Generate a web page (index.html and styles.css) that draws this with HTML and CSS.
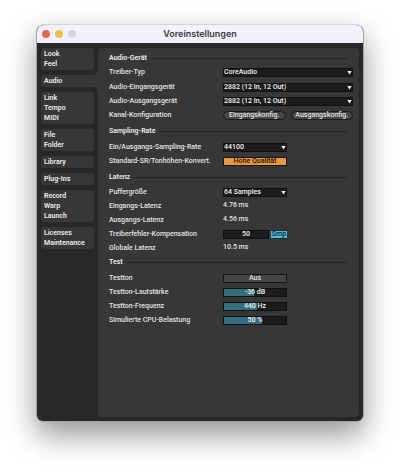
FILE: index.html
```html
<!DOCTYPE html>
<html lang="de">
<head>
  <meta charset="UTF-8">
  <meta name="viewport" content="width=device-width, initial-scale=1">
  <title>Voreinstellungen</title>
  <link rel="stylesheet" href="styles.css">
</head>
<body>
  <div class="window">
    <header class="titlebar">
      <div class="lights">
        <button class="light close" aria-label="Schließen"></button>
        <button class="light minimize" aria-label="Minimieren"></button>
        <button class="light zoom" aria-label="Zoomen" disabled></button>
      </div>
      <h1>Voreinstellungen</h1>
    </header>
    <div class="content">
      <nav class="tabs">
        <a class="tab" href="#look">Look<br>Feel</a>
        <a class="tab active" href="#audio">Audio</a>
        <a class="tab" href="#link">Link<br>Tempo<br>MIDI</a>
        <a class="tab" href="#file">File<br>Folder</a>
        <a class="tab" href="#library">Library</a>
        <a class="tab" href="#plugins">Plug-Ins</a>
        <a class="tab" href="#record">Record<br>Warp<br>Launch</a>
        <a class="tab" href="#licenses">Licenses<br>Maintenance</a>
      </nav>
      <main class="panel">
        <section class="device">
          <h2>Audio-Gerät</h2>
          <div class="row driver">
            <label for="driver">Treiber-Typ</label>
            <div class="select wide"><select id="driver"><option>CoreAudio</option></select></div>
          </div>
          <div class="row">
            <label for="input">Audio-Eingangsgerät</label>
            <div class="select wide"><select id="input"><option>2882 (12 In, 12 Out)</option></select></div>
          </div>
          <div class="row">
            <label for="output">Audio-Ausgangsgerät</label>
            <div class="select wide"><select id="output"><option>2882 (12 In, 12 Out)</option></select></div>
          </div>
          <div class="row">
            <span>Kanal-Konfiguration</span>
            <div class="wide buttons">
              <button class="pill">Eingangskonfig.</button>
              <button class="pill">Ausgangskonfig.</button>
            </div>
          </div>
        </section>

        <section>
          <h2>Sampling-Rate</h2>
          <div class="row">
            <label for="rate">Ein/Ausgangs-Sampling-Rate</label>
            <div class="select"><select id="rate"><option>44100</option></select></div>
          </div>
          <div class="row">
            <label for="quality">Standard-SR/Tonhöhen-Konvert.</label>
            <button class="toggle on" id="quality">Hohe Qualität</button>
          </div>
        </section>

        <section class="latency">
          <h2>Latenz</h2>
          <div class="row">
            <label for="buffer">Puffergröße</label>
            <div class="select"><select id="buffer"><option>64 Samples</option></select></div>
          </div>
          <div class="row"><span>Eingangs-Latenz</span><span class="value">4.76 ms</span></div>
          <div class="row"><span>Ausgangs-Latenz</span><span class="value">4.56 ms</span></div>
          <div class="row">
            <label for="compensation">Treiberfehler-Kompensation</label>
            <div class="compensation">
              <input type="text" id="compensation" value="50">
              <button class="unit">Smp</button>
            </div>
          </div>
          <div class="row"><span>Globale Latenz</span><span class="value">10.5 ms</span></div>
        </section>

        <section class="test">
          <h2>Test</h2>
          <div class="row">
            <label for="tone">Testton</label>
            <button class="toggle" id="tone">Aus</button>
          </div>
          <div class="row">
            <label for="volume">Testton-Lautstärke</label>
            <div class="slider">
              <input type="range" id="volume" min="0" max="100" value="48" style="--fill: 48%">
              <output for="volume">-36 dB</output>
            </div>
          </div>
          <div class="row">
            <label for="frequency">Testton-Frequenz</label>
            <div class="slider">
              <input type="range" id="frequency" min="0" max="100" value="54" style="--fill: 54%">
              <output for="frequency">440 Hz</output>
            </div>
          </div>
          <div class="row">
            <label for="cpu">Simulierte CPU-Belastung</label>
            <div class="slider">
              <input type="range" id="cpu" min="0" max="100" value="62" style="--fill: 62%">
              <output for="cpu">50 %</output>
            </div>
          </div>
        </section>
      </main>
    </div>
  </div>
</body>
</html>
```
FILE: styles.css
```css
* { box-sizing: border-box; }
body { margin: 0; min-height: 100vh; padding: 24px 36px 48px; display: flex; background: #fff; font-family: Roboto, "Liberation Sans", sans-serif; font-size: 7px; font-weight: 500; line-height: 10px; color: #e2e2e2; }
button, input, select { font: inherit; color: inherit; margin: 0; padding: 0; border: 0; border-radius: 0; }

.window { flex: 1; min-width: 0; display: flex; flex-direction: column; border: 1px solid #a5a5a5; border-top-color: #d4d4d4; border-radius: 8px 8px 7px 7px; background: #282828; overflow: hidden; box-shadow: 0 13px 30px rgba(0, 0, 0, 0.42); }

/* title bar */
.titlebar { display: grid; grid-template-columns: 48px 1fr 48px; align-items: center; height: 18px; background: #eff2fb; }
.titlebar h1 { margin: 0; font-family: Inter, "Liberation Sans", sans-serif; font-size: 9px; font-weight: 600; line-height: 12px; text-align: center; color: #3c3c40; }
.lights { display: flex; gap: 5px; padding-left: 5px; }
.light { width: 8px; height: 8px; border-radius: 50%; }
.close { background: #ec6559; }
.minimize { background: #f4bd4f; }
.zoom { background: #d3d6de; }

.content { flex: 1; display: flex; gap: 4px; padding: 5px 4px 4px; }

/* tabs */
.tabs { width: 53px; flex: none; display: flex; flex-direction: column; gap: 5px; }
.tab { display: block; padding: 1px 3px; border-radius: 3px; background: #373737; color: #ececec; font-weight: 600; text-decoration: none; }
.tab.active { position: relative; margin-right: -6px; border-radius: 3px 0 0 3px; }
.tab.active::before, .tab.active::after { content: ""; position: absolute; right: 2px; width: 4px; height: 4px; }
.tab.active::before { top: -4px; background: radial-gradient(circle at 0 0, #282828 3px, #373737 4px); }
.tab.active::after { bottom: -4px; background: radial-gradient(circle at 0 100%, #282828 3px, #373737 4px); }

/* settings */
.panel { flex: 1; min-width: 0; padding: 3px 6px 8px 11px; border-radius: 4px; background: #373737; }
section { margin-bottom: 2px; }
h2 { display: flex; align-items: center; gap: 4px; height: 14px; margin: 0 5px 2px 0; font-size: 7px; font-weight: 600; color: #ececec; }
h2::after { content: ""; flex: 1; height: 1px; background: #252525; }
.device h2 { margin-bottom: 0; }
.driver { margin-bottom: 1px; }
.latency { margin-bottom: 0; }
.latency h2 { margin-bottom: 1px; }
.row { display: grid; grid-template-columns: 114px 64px 1fr; align-items: center; height: 14px; white-space: nowrap; }
.wide { grid-column: 2 / 4; }

.select { position: relative; display: flex; }
.select select { width: 100%; height: 9px; padding-left: 0; border: 1px solid #111; background: #1c1c1c; color: #f0f0f0; line-height: 7px; appearance: none; }
.select::after { content: ""; position: absolute; top: 3px; right: 1px; width: 5px; height: 4px; background: #f0f0f0; clip-path: polygon(0 0, 100% 0, 50% 100%); pointer-events: none; }

.buttons { display: grid; grid-template-columns: 1fr 1fr; gap: 5px; }
.pill { height: 9px; border: 1px solid #1a1a1a; border-radius: 5px; background: #454545; line-height: 7px; }

.toggle { height: 9px; border: 1px solid #161616; background: #454545; line-height: 7px; }
.toggle.on { background: #e9983e; color: #1c1408; }

.value { padding-bottom: 2px; }
.compensation { display: flex; gap: 2px; }
.compensation input { flex: 1; min-width: 0; height: 9px; border: 1px solid #111; background: #1c1c1c; color: #f0f0f0; line-height: 7px; text-align: center; }
.unit { width: 16px; height: 9px; border: solid #16303a; border-width: 1px 0; background: #52b9d6; color: #10252c; line-height: 7px; }

.slider { display: grid; height: 9px; border: 1px solid #111; }
.slider input, .slider output { grid-area: 1 / 1; }
.slider input { width: 100%; height: 7px; background: linear-gradient(to right, #326e7e var(--fill), #1c1c1c var(--fill)); appearance: none; }
.slider input::-webkit-slider-thumb { width: 1px; height: 7px; appearance: none; }
.slider output { line-height: 7px; text-align: center; color: #f0f0f0; pointer-events: none; z-index: 1; }
```
